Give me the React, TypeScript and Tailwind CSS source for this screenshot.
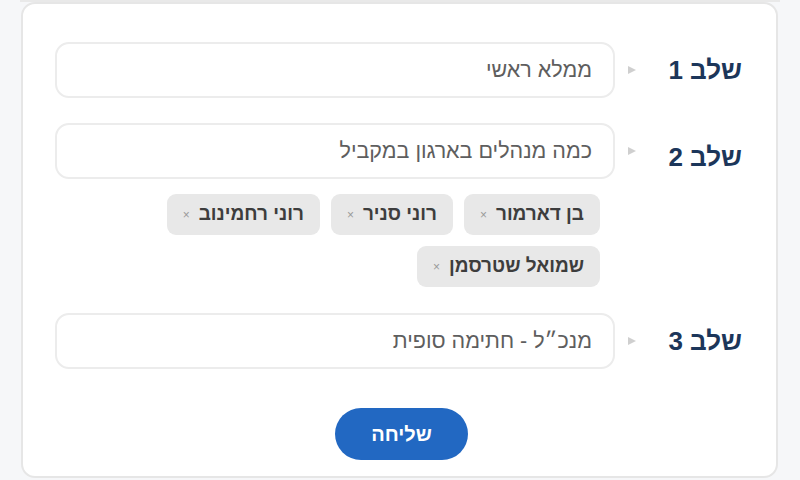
import React from "react";

function Arrow() {
  return (
    <svg width="10" height="10" viewBox="0 0 10 10" className="shrink-0">
      <polygon points="1,1 9,5 1,9" fill="#cfcfcf" />
    </svg>
  );
}

function Chip({ name }: { name: string }) {
  return (
    <div className="flex h-[41px] items-center gap-[9px] rounded-[9px] bg-[#e8e8e8] pl-[16px] pr-[16px]">
      <span className="text-[19px] font-bold text-[#3d3d3d]">{name}</span>
      <span className="text-[12px] leading-none text-[#9a9a9a]">×</span>
    </div>
  );
}

function Row({ label, value, labelClass = "" }: { label: string; value: string; labelClass?: string }) {
  return (
    <div className="flex items-center">
      <div className={"w-[76px] shrink-0 text-[26px] font-bold leading-none text-[#1c365a] " + labelClass}>{label}</div>
      <div className="w-[29px] shrink-0" />
      <div className="flex w-[22px] shrink-0 justify-start">
        <Arrow />
      </div>
      <div className="flex h-[56px] flex-1 items-center rounded-[14px] border-2 border-[#ececec] bg-white pr-[21px] text-[21.5px] text-[#5e5e5e]">
        {value}
      </div>
    </div>
  );
}

export default function App() {
  return (
    <div
      dir="rtl"
      className="h-[480px] w-[800px] overflow-hidden bg-[#f6f7f9]"
      style={{ fontFamily: '"Liberation Sans", Arial, sans-serif' }}
    >
      <div className="mx-[20px] h-[2px] bg-[#e9e9e9]" />
      <div className="ml-[21px] mr-[22px] flex h-[476px] flex-col rounded-[14px] border-2 border-[#e6e6e6] bg-white pl-[32px] pr-[34px] pt-[38px]">
        <Row label="שלב 1" value="ממלא ראשי" />
        <div className="mt-[25px]">
          <Row label="שלב 2" value="כמה מנהלים בארגון במקביל" labelClass="mt-[12px]" />
          <div className="mr-[142px] ml-[15px] mt-[15px] flex flex-wrap gap-x-[11px] gap-y-[11px]">
            <Chip name="בן דארמור" />
            <Chip name="רוני סניר" />
            <Chip name="רוני רחמינוב" />
            <Chip name="שמואל שטרסמן" />
          </div>
        </div>
        <div className="mt-[26px]">
          <Row label="שלב 3" value={"מנכ״ל - חתימה סופית"} />
        </div>
        <div className="mt-[39px] flex justify-center pl-[6px]">
          <button className="flex h-[52px] w-[133px] items-center justify-center rounded-full bg-[#2268c2] text-[20px] font-bold text-white">
            שליחה
          </button>
        </div>
      </div>
    </div>
  );
}
